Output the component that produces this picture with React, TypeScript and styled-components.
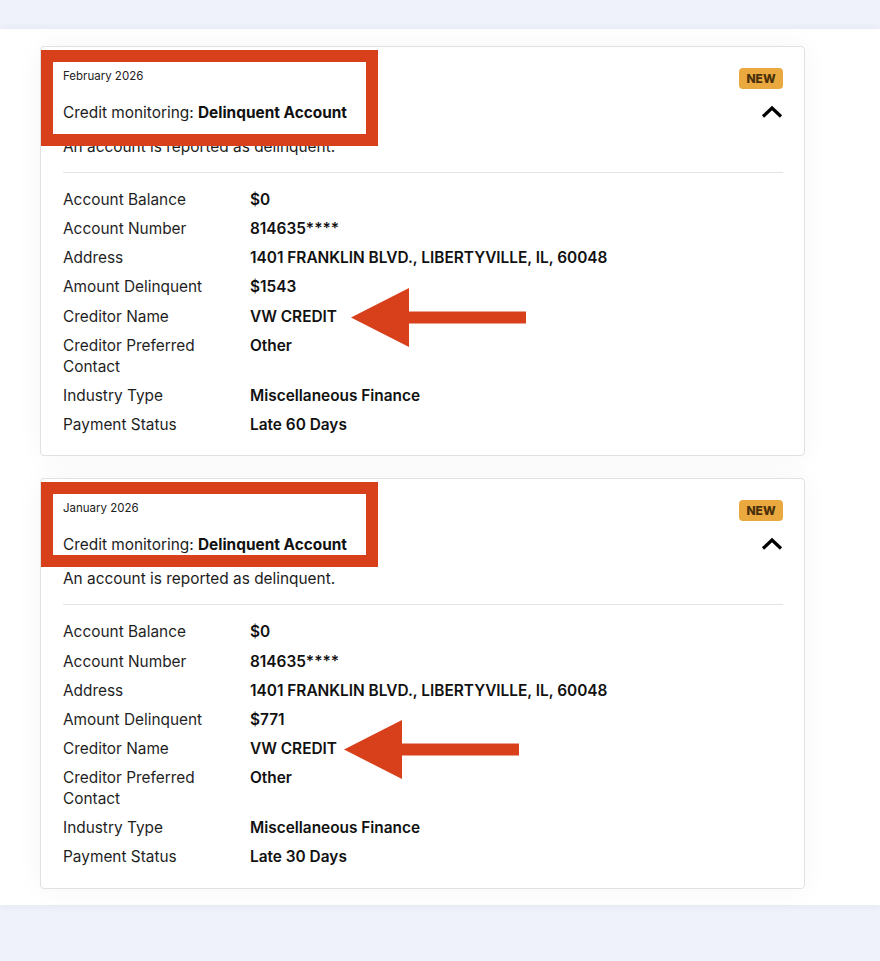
import React from "react";
import styled, { createGlobalStyle } from "styled-components";

const Global = createGlobalStyle`
  html, body { margin: 0; padding: 0; background: #eff2fa; }
  body { font-family: "Inter", "Lato", sans-serif; color: #1c1c1c; }
  * { box-sizing: border-box; }
`;

const Page = styled.div`
  padding: 29px 0 58px;
`;

const Panel = styled.section`
  background: #ffffff;
  padding: 17px 75px 16px 40px;
  display: flex;
  flex-direction: column;
  gap: 22px;
  box-shadow: 0 0 8px rgba(30, 40, 80, 0.07);
`;

const Card = styled.article`
  position: relative;
  border: 1px solid #e1e1e1;
  border-radius: 4px;
  background: #fff;
  padding: 22px 21px 20.5px 22px;
  box-shadow: 0 0 28px rgba(0, 0, 0, 0.045);
`;

const Header = styled.div`
  display: flex;
  justify-content: space-between;
  align-items: flex-start;
`;

const HeaderText = styled.div`
  display: flex;
  flex-direction: column;
`;

const DateLine = styled.div`
  font-size: 11.5px;
  line-height: 14px;
  color: #222;
`;

const Title = styled.div`
  margin-top: 20px;
  font-size: 15.4px;
  line-height: 20px;
  color: #1c1c1c;
  b { font-weight: 700; color: #111; }
`;

const Desc = styled.div`
  margin-top: 14px;
  font-size: 15.4px;
  line-height: 20px;
  color: #1c1c1c;
`;

const Side = styled.div`
  display: flex;
  flex-direction: column;
  align-items: flex-end;
  gap: 16px;
`;

const Badge = styled.span`
  display: inline-flex;
  align-items: center;
  justify-content: center;
  width: 44px;
  height: 21px;
  margin-top: -1px;
  border-radius: 4px;
  background: #e9a93f;
  color: #4b300a;
  font-size: 12px;
  font-weight: 800;
`;

const Chevron = styled.svg`
  width: 22px;
  height: 14px;
  display: block;
`;

const Divider = styled.hr`
  border: 0;
  border-top: 1px solid #e3e3e3;
  margin: 15px 0 16px;
`;

const Details = styled.dl`
  margin: 0;
  display: grid;
  grid-template-columns: 187px 1fr;
  row-gap: 8.15px;
  font-size: 15.4px;
  line-height: 21px;
`;

const Label = styled.dt`
  margin: 0;
  padding-right: 40px;
  color: #1f1f1f;
`;

const Value = styled.dd`
  margin: 0;
  font-weight: 600;
  color: #111;
`;

const Highlight = styled.div<{ $h: number }>`
  position: absolute;
  left: 0;
  top: 3px;
  width: 337px;
  height: ${(p) => p.$h}px;
  border: 12px solid #d8401c;
  pointer-events: none;
`;

const ArrowSvg = styled.svg<{ $x: number; $y: number }>`
  position: absolute;
  left: ${(p) => p.$x}px;
  top: ${(p) => p.$y}px;
  width: 176px;
  height: 61px;
`;

type Item = { date: string; amount: string; status: string; boxH: number; arrowX: number; arrowY: number };

const items: Item[] = [
  { date: "February 2026", amount: "$1543", status: "Late 60 Days", boxH: 96, arrowX: 309, arrowY: 240 },
  { date: "January 2026", amount: "$771", status: "Late 30 Days", boxH: 85, arrowX: 302, arrowY: 240 },
];

const Arrow = ({ x, y }: { x: number; y: number }) => (
  <ArrowSvg $x={x} $y={y} viewBox="0 0 176 61">
    <polygon points="1,30.5 59,1 59,24.5 176,24.5 176,36.5 59,36.5 59,60" fill="#d8401c" />
  </ArrowSvg>
);

const DetailCard = ({ it }: { it: Item }) => {
  const rows: [string, string][] = [
    ["Account Balance", "$0"],
    ["Account Number", "814635****"],
    ["Address", "1401 FRANKLIN BLVD., LIBERTYVILLE, IL, 60048"],
    ["Amount Delinquent", it.amount],
    ["Creditor Name", "VW CREDIT"],
    ["Creditor Preferred Contact", "Other"],
    ["Industry Type", "Miscellaneous Finance"],
    ["Payment Status", it.status],
  ];
  return (
    <Card>
      <Header>
        <HeaderText>
          <DateLine>{it.date}</DateLine>
          <Title>
            Credit monitoring: <b>Delinquent Account</b>
          </Title>
          <Desc>An account is reported as delinquent.</Desc>
        </HeaderText>
        <Side>
          <Badge>NEW</Badge>
          <Chevron viewBox="0 0 22 14">
            <polyline points="2,11.5 11,3 20,11.5" fill="none" stroke="#000" strokeWidth="3.2" />
          </Chevron>
        </Side>
      </Header>
      <Divider />
      <Details>
        {rows.map(([k, v]) => (
          <React.Fragment key={k}>
            <Label>{k}</Label>
            <Value>{v}</Value>
          </React.Fragment>
        ))}
      </Details>
      <Highlight $h={it.boxH} />
      <Arrow x={it.arrowX} y={it.arrowY} />
    </Card>
  );
};

export default function App() {
  return (
    <>
      <Global />
      <Page>
        <Panel>
          {items.map((it) => (
            <DetailCard key={it.date} it={it} />
          ))}
        </Panel>
      </Page>
    </>
  );
}
